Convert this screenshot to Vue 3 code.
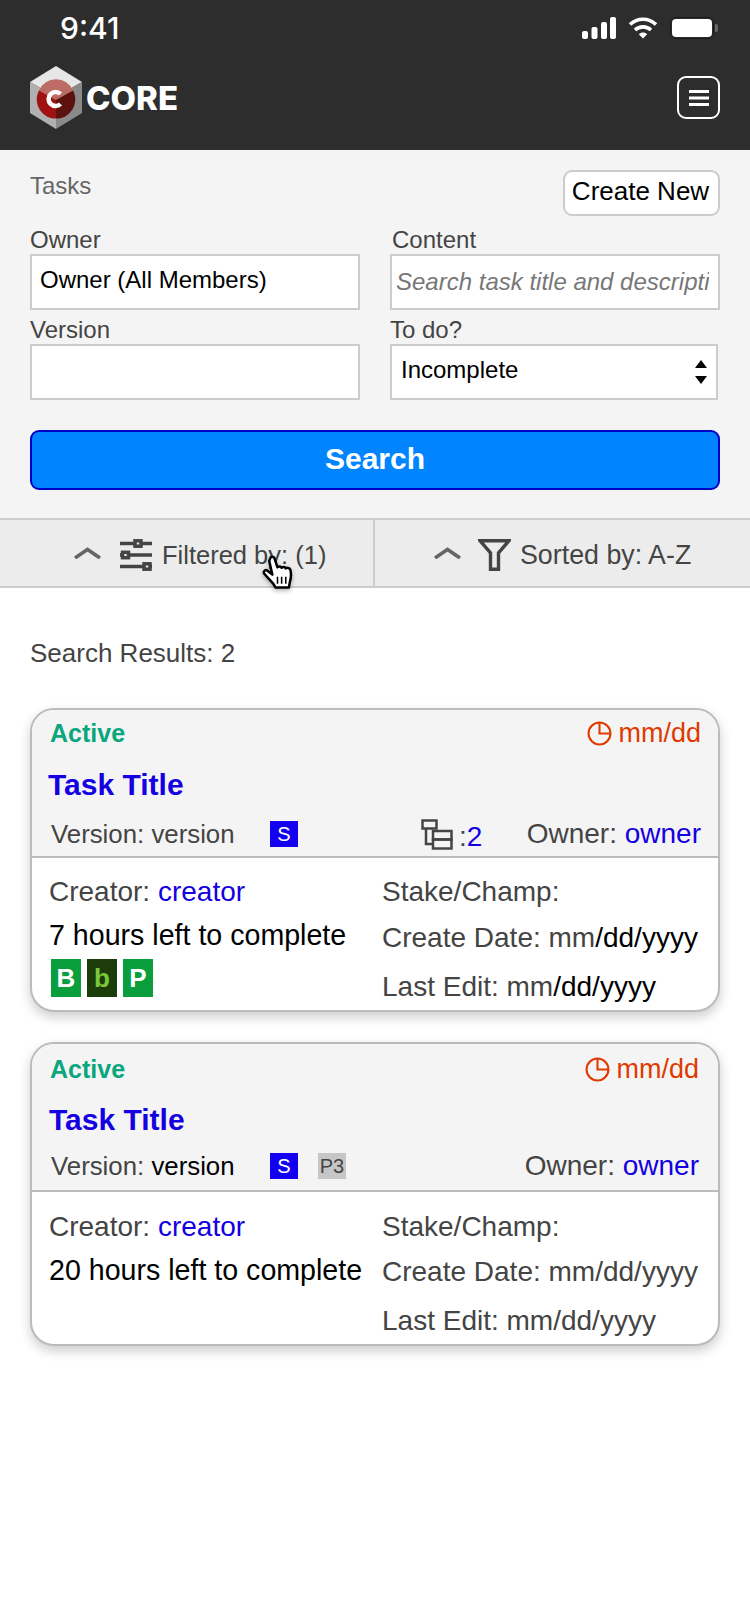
<template>
  <div class="page">
    <header class="top">
      <div class="status">
        <span class="time">9:41</span>
        <div class="status-icons">
          <svg width="34" height="22" viewBox="0 0 34 22" fill="#fff">
            <rect x="0" y="14" width="6" height="8" rx="2" />
            <rect x="9.5" y="10" width="6" height="12" rx="2" />
            <rect x="19" y="5" width="6" height="17" rx="2" />
            <rect x="28" y="0" width="6" height="22" rx="2" />
          </svg>
          <svg class="wifi" width="30" height="22" viewBox="0 0 30 22" fill="none" stroke="#fff" stroke-width="3.6">
            <path d="M2 7.5C9.5 0.5 20.5 0.5 28 7.5" />
            <path d="M7 13C11.5 8.8 18.5 8.8 23 13" />
            <path d="M15 21.5L10.8 17.2C13 15 17 15 19.2 17.2Z" fill="#fff" stroke="none" />
          </svg>
          <div class="battery"><span></span></div>
        </div>
      </div>
      <nav class="nav">
        <div class="brand">
          <svg width="52" height="63" viewBox="0 0 52 63">
            <path d="M26 0L52 16L26 31L0 16Z" fill="#e6e6e6" />
            <path d="M0 16L26 31V63L0 47Z" fill="#b0b0b0" />
            <path d="M52 16L26 31V63L52 47Z" fill="#8a8a8a" />
            <path d="M26 34L9 24.500A18.500 18.500 0 0 1 43 24.500Z" fill="#bc6c64" />
            <path d="M26 34L43 24.500A19 19 0 0 1 26 52.500Z" fill="#5c130f" />
            <path d="M26 34V52.500A19 19 0 0 1 9 24.500Z" fill="#a01212" />
            <path d="M30.500 28A7 7 0 1 0 30.500 38" fill="none" stroke="#fff" stroke-width="4.500" />
          </svg>
          <span class="brand-name">CORE</span>
        </div>
        <button class="menu-btn">
          <svg width="20" height="16" viewBox="0 0 20 16" fill="#fff">
            <rect y="0" width="20" height="3" />
            <rect y="6.5" width="20" height="3" />
            <rect y="13" width="20" height="3" />
          </svg>
        </button>
      </nav>
    </header>

    <section class="panel">
      <div class="panel-head">
        <span class="panel-title">Tasks</span>
        <button class="create-btn">Create New</button>
      </div>
      <div class="fields">
        <div class="field">
          <label>Owner</label>
          <input class="owner-input" value="Owner (All Members)" />
        </div>
        <div class="field">
          <label class="content-label">Content</label>
          <input class="content-input" placeholder="Search task title and description" />
        </div>
        <div class="field">
          <label>Version</label>
          <input />
        </div>
        <div class="field">
          <label>To do?</label>
          <div class="select-box">
            <span>Incomplete</span>
            <svg width="12" height="24" viewBox="0 0 12 24" fill="#000">
              <path d="M6 0L12 8H0Z" />
              <path d="M6 24L0 16H12Z" />
            </svg>
          </div>
        </div>
      </div>
      <button class="search-btn">Search</button>
    </section>

    <div class="filter-bar">
      <div class="filter-cell filter-left">
        <svg class="chevron" width="27" height="12" viewBox="0 0 27 12" fill="none" stroke="#666" stroke-width="3.6">
          <path d="M1 11L13.5 2.5L26 11" />
        </svg>
        <svg width="32" height="32" viewBox="0 0 32 32" fill="none" stroke="#444" stroke-width="3.5">
          <path d="M0 4.5H32M0 16H32M0 27.5H32" />
          <rect x="15" y="1.8" width="6" height="5.400" fill="#ececec" />
          <rect x="2.500" y="13.300" width="6" height="5.400" fill="#ececec" />
          <rect x="24" y="24.800" width="6" height="5.400" fill="#ececec" />
        </svg>
        <span>Filtered by: (1)</span>
      </div>
      <div class="filter-cell filter-right">
        <svg class="chevron" width="27" height="12" viewBox="0 0 27 12" fill="none" stroke="#666" stroke-width="3.6">
          <path d="M1 11L13.5 2.5L26 11" />
        </svg>
        <svg width="33" height="32" viewBox="0 0 33 32" fill="none" stroke="#444" stroke-width="3.4">
          <path d="M2 1.700H31L20.500 14V30.300H12.500V14Z" />
        </svg>
        <span>Sorted by: A-Z</span>
      </div>
      <svg class="hand" width="31" height="35" viewBox="0 0 30 32">
        <path d="M8 2C8.500 0.300 11 0.500 12 2L15 11C16 9.500 18.500 10 19 11.500C20 10 22.500 10.500 23 12C24 11 27 11.500 27.500 13.500C28.500 18 28 22 27 25L26 30.500H13L11 27L2 17C1 15 3 13 5 14L10 18L7 5Z" fill="#fff" stroke="#000" stroke-width="2.400" stroke-linejoin="round" />
        <path d="M15 20V27M19 20V27M23 20V27" stroke="#000" stroke-width="1.500" />
      </svg>
    </div>

    <main class="results">
      <p class="results-count">Search Results: 2</p>
      <article v-for="task in tasks" :key="task.left" class="card" :class="{ 'card-alt': task.alt }">
        <div class="card-head">
          <div class="head-top">
            <span class="state">Active</span>
            <span class="due">
              <svg width="25" height="25" viewBox="0 0 24 24" fill="none" stroke="#e03a00" stroke-width="2">
                <circle cx="12" cy="12" r="10.500" />
                <path d="M12 2V12H22" />
              </svg>
              mm/dd
            </span>
          </div>
          <h2 class="task-title">Task Title</h2>
          <div class="head-meta">
            <span class="version">Version: <span :class="{ dark: task.alt }">version</span></span>
            <span class="tag tag-s">S</span>
            <span v-if="task.priority" class="tag tag-p">{{ task.priority }}</span>
            <span v-if="task.children" class="children">
              <svg width="32" height="31" viewBox="0 0 32 31" fill="none" stroke="#444" stroke-width="2.500">
                <rect x="1.500" y="1.500" width="14" height="8" />
                <path d="M5 9.500V25H12" />
                <rect x="12" y="12" width="18.500" height="8.500" />
                <rect x="12" y="20.500" width="18.500" height="9" />
              </svg>
              <span class="children-count">:<b>{{ task.children }}</b></span>
            </span>
            <span class="owner">Owner: <a>owner</a></span>
          </div>
        </div>
        <div class="card-body">
          <div class="col-left">
            <div class="line">Creator: <a>creator</a></div>
            <div class="line dark hours">{{ task.left }}</div>
            <div v-if="task.badges" class="badges">
              <span class="badge">B</span>
              <span class="badge badge-dark">b</span>
              <span class="badge">P</span>
            </div>
          </div>
          <div class="col-right">
            <div class="line">Stake/Champ:</div>
            <div class="line">Create Date: mm<span :class="{ dark: !task.alt }">/dd/yyyy</span></div>
            <div class="line">Last Edit: mm<span :class="{ dark: !task.alt }">/dd/yyyy</span></div>
          </div>
        </div>
      </article>
    </main>
  </div>
</template>

<script setup>
const tasks = [
  { left: '7 hours left to complete', children: 2, badges: true },
  { left: '20 hours left to complete', priority: 'P3', alt: true },
]
</script>

<style>
html, body { margin: 0; background: #fff; }
</style>

<style scoped>
.page {
  position: relative;
  width: 750px;
  min-height: 1620px;
  background: #fff;
  font-family: "Liberation Sans", Arial, sans-serif;
  color: #444;
}

/* header */
.top { height: 150px; background: #2d2d2d; color: #fff; }
.status {
  display: flex;
  align-items: center;
  justify-content: space-between;
  height: 56px;
  padding: 0 36px 0 60px;
}
.time { font-size: 30px; font-family: Inter, sans-serif; font-weight: 500; }
.status-icons { display: flex; align-items: center; gap: 12px; }
.battery {
  position: relative;
  width: 44px;
  height: 22px;
  box-sizing: border-box;
  padding: 1px;
  border: 1px solid #1a1a1a;
  border-radius: 6px;
}
.battery span { display: block; height: 100%; background: #fff; border-radius: 4px; }
.battery::after {
  content: "";
  position: absolute;
  right: -5px;
  top: 6px;
  width: 3px;
  height: 8px;
  background: #666;
  border-radius: 0 2px 2px 0;
}
.nav {
  display: flex;
  align-items: flex-start;
  justify-content: space-between;
  padding: 10px 30px 0;
}
.brand { display: flex; align-items: center; gap: 4px; }
.brand-name {
  font-family: Inter, sans-serif;
  font-size: 33px;
  font-weight: 800;
}
.menu-btn {
  display: flex;
  align-items: center;
  justify-content: center;
  width: 43px;
  height: 43px;
  margin-top: 10px;
  padding: 0;
  background: none;
  border: 2px solid #fff;
  border-radius: 9px;
}

/* search panel */
.panel { padding: 20px 30px 28px; background: #f4f4f4; }
.panel-head { display: flex; justify-content: space-between; align-items: flex-start; }
.panel-title { margin-top: 2px; font-size: 24px; line-height: 28px; color: #666; }
.create-btn {
  height: 46px;
  width: 157px;
  padding: 0 2px 3px 0;
  background: #fff;
  border: 2px solid #ccc;
  border-radius: 9px;
  font: 26px "Liberation Sans", Arial, sans-serif;
  color: #000;
}
.fields {
  display: grid;
  grid-template-columns: 330px 330px;
  column-gap: 30px;
  row-gap: 6px;
  margin-top: 10px;
}
.field label { display: block; font-size: 24px; line-height: 28px; color: #444; }
.field .content-label { padding-left: 2px; }
.field input, .select-box {
  display: block;
  box-sizing: border-box;
  width: 100%;
  height: 56px;
  padding: 0 9px;
  background: #fff;
  border: 2px solid #ccc;
  border-radius: 0;
  font: 24px "Liberation Sans", Arial, sans-serif;
  color: #000;
  outline: none;
}
.field .owner-input { padding: 0 8px 4px; }
.field .content-input { padding: 0 9px 0 4px; }
.content-input::placeholder { color: #777; font-style: italic; opacity: 1; }
.select-box {
  display: flex;
  align-items: center;
  justify-content: space-between;
  width: 328px;
  padding-bottom: 4px;
}
.select-box svg { margin: 4px 0 0; }
.search-btn {
  display: block;
  width: 100%;
  height: 60px;
  margin-top: 30px;
  padding: 0 0 2px;
  background: #0084ff;
  border: 2px solid #0000c8;
  border-radius: 9px;
  font: bold 30px "Liberation Sans", Arial, sans-serif;
  color: #fff;
}

/* filter row */
.filter-bar {
  position: relative;
  display: flex;
  height: 70px;
  box-sizing: border-box;
  background: #ececec;
  border-top: 2px solid #ccc;
  border-bottom: 2px solid #ccc;
  font-size: 25.5px;
}
.filter-cell { display: flex; align-items: center; padding-top: 4px; }
.filter-cell .chevron { margin-top: -4px; }
.filter-left { width: 375px; box-sizing: border-box; padding-left: 74px; border-right: 2px solid #ccc; }
.filter-left .chevron { margin-right: 19px; }
.filter-left span { margin-left: 10px; }
.filter-right { padding-left: 59px; font-size: 26.8px; }
.filter-right .chevron { margin-right: 17px; }
.filter-right span { margin-left: 9px; }
.hand { position: absolute; left: 262px; top: 35px; filter: drop-shadow(0 2px 2px rgba(0, 0, 0, 0.3)); }

/* results */
.results { padding: 50px 30px 0; }
.results-count { margin: 0 0 40px; font-size: 26px; line-height: 30px; }
.card {
  box-sizing: border-box;
  height: 304px;
  margin-bottom: 30px;
  background: #fff;
  border: 2px solid #bbb;
  border-radius: 24px;
  box-shadow: 0 5px 12px rgba(0, 0, 0, 0.2);
  overflow: hidden;
}
.card-head {
  box-sizing: border-box;
  height: 148px;
  padding: 8px 17px 0 17px;
  background: #f4f4f5;
  border-bottom: 2px solid #bbb;
}
.head-top { display: flex; justify-content: space-between; align-items: center; height: 30px; padding-left: 1px; }
.state { font-size: 25px; font-weight: bold; color: #0aa67d; }
.due { display: flex; align-items: center; gap: 6px; font-size: 27px; color: #e03a00; }
.task-title { margin: 19px 0 0 -1px; font-size: 30px; line-height: 36px; font-weight: bold; color: #1400e0; }
.head-meta { display: flex; align-items: center; height: 36px; margin-top: 13px; padding-left: 2px; }
.version { width: 219px; font-size: 25.8px; white-space: nowrap; }
.dark { color: #000; }
.tag {
  display: flex;
  align-items: center;
  justify-content: center;
  width: 28px;
  height: 26px;
  font-size: 20px;
}
.tag-s { background: #1400f0; color: #fff; }
.tag-p { margin-left: 20px; background: #c6c6c6; color: #444; }
.children { display: flex; align-items: center; margin-left: 123px; }
.children-count { margin: 5px 0 0 6px; font-size: 28px; color: #444; }
.children-count b { font-weight: normal; color: #1400e0; }
.owner { margin-left: auto; font-size: 28px; }
a { color: #1400e0; }

.card-alt .card-head { padding: 10px 19px 0 17px; }
.card-alt .task-title { margin: 18px 0 0; }
.card-alt .head-meta { margin-top: 10px; }
.card-alt .card-body { padding-top: 13px; }

.card-body { display: flex; padding: 12px 0 0 17px; font-size: 28px; }
.line { height: 44px; line-height: 44px; white-space: nowrap; }
.col-left { width: 333px; flex: none; }
.hours { margin-top: -1px; font-size: 28.6px; }
.badges { display: flex; gap: 6px; margin: 2px 0 0 2px; }
.badge {
  display: flex;
  align-items: center;
  justify-content: center;
  width: 30px;
  height: 38px;
  background: #0a9e3c;
  font-size: 26px;
  font-weight: bold;
  color: #fff;
}
.badge-dark { background: #1c3d0a; color: #7ac83a; }
.col-right .line + .line { margin-top: 2px; }
.col-right .line:last-child { margin-top: 5px; }
.card-alt .col-right .line + .line { margin-top: 1px; }
.card-alt .col-right .line:last-child { margin-top: 5px; }
</style>
